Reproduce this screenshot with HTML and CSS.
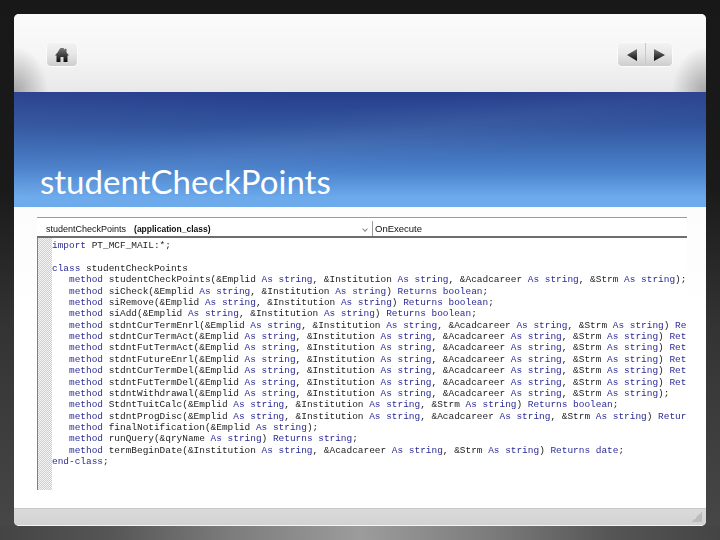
FILE: index.html
```html
<!DOCTYPE html>
<html lang="en">
<head>
<meta charset="utf-8">
<title>studentCheckPoints</title>
<link rel="stylesheet" href="styles.css">
</head>
<body>
<main class="slide">
  <header class="top">
    <button class="btn home" aria-label="Home">
      <svg width="14" height="14" viewBox="0 0 14 14"><defs><linearGradient id="g" x1="0" y1="0" x2="0" y2="1"><stop offset="0" stop-color="#777"/><stop offset="1" stop-color="#0c0c0c"/></linearGradient></defs><path fill="url(#g)" d="M5.500 0H8.500L9.500 1.500 10.500 0.500 11.500 1V4.500L14 7.500H12.500V14H8.500V9H5.500V14H1.500V7.500H0L2.500 4.500 4 2Z"/></svg>
    </button>
    <div class="btn nav">
      <span class="half wide"><svg width="10" height="12" viewBox="0 0 10 12"><path fill="url(#g)" d="M10 0V12L0 6Z"/></svg></span>
      <span class="half"><svg width="11" height="12" viewBox="0 0 11 12"><path fill="url(#g)" d="M0 0V12L11 6Z"/></svg></span>
    </div>
  </header>
  <section class="band"><h1>studentCheckPoints</h1></section>
  <section class="body">
    <div class="shot">
      <div class="bar">
        <div class="cell left"><span>studentCheckPoints</span><b class="cls">(application_class)</b><i class="chev"></i></div>
        <div class="cell right">OnExecute</div>
      </div>
      <div class="editor">
        <div class="gutter"></div>
        <pre class="code"><span class="k">import</span> PT_MCF_MAIL:*;

<span class="k">class</span> studentCheckPoints
   <span class="k">method</span> studentCheckPoints(&amp;Emplid <span class="k">As string</span>, &amp;Institution <span class="k">As string</span>, &amp;Acadcareer <span class="k">As string</span>, &amp;Strm <span class="k">As string</span>);
   <span class="k">method</span> siCheck(&amp;Emplid <span class="k">As string</span>, &amp;Institution <span class="k">As string</span>) <span class="k">Returns boolean</span>;
   <span class="k">method</span> siRemove(&amp;Emplid <span class="k">As string</span>, &amp;Institution <span class="k">As string</span>) <span class="k">Returns boolean</span>;
   <span class="k">method</span> siAdd(&amp;Emplid <span class="k">As string</span>, &amp;Institution <span class="k">As string</span>) <span class="k">Returns boolean</span>;
   <span class="k">method</span> stdntCurTermEnrl(&amp;Emplid <span class="k">As string</span>, &amp;Institution <span class="k">As string</span>, &amp;Acadcareer <span class="k">As string</span>, &amp;Strm <span class="k">As string</span>) <span class="k">Returns boolean</span>;
   <span class="k">method</span> stdntCurTermAct(&amp;Emplid <span class="k">As string</span>, &amp;Institution <span class="k">As string</span>, &amp;Acadcareer <span class="k">As string</span>, &amp;Strm <span class="k">As string</span>) <span class="k">Returns boolean</span>;
   <span class="k">method</span> stdntFutTermAct(&amp;Emplid <span class="k">As string</span>, &amp;Institution <span class="k">As string</span>, &amp;Acadcareer <span class="k">As string</span>, &amp;Strm <span class="k">As string</span>) <span class="k">Returns boolean</span>;
   <span class="k">method</span> stdntFutureEnrl(&amp;Emplid <span class="k">As string</span>, &amp;Institution <span class="k">As string</span>, &amp;Acadcareer <span class="k">As string</span>, &amp;Strm <span class="k">As string</span>) <span class="k">Returns boolean</span>;
   <span class="k">method</span> stdntCurTermDel(&amp;Emplid <span class="k">As string</span>, &amp;Institution <span class="k">As string</span>, &amp;Acadcareer <span class="k">As string</span>, &amp;Strm <span class="k">As string</span>) <span class="k">Returns boolean</span>;
   <span class="k">method</span> stdntFutTermDel(&amp;Emplid <span class="k">As string</span>, &amp;Institution <span class="k">As string</span>, &amp;Acadcareer <span class="k">As string</span>, &amp;Strm <span class="k">As string</span>) <span class="k">Returns boolean</span>;
   <span class="k">method</span> stdntWithdrawal(&amp;Emplid <span class="k">As string</span>, &amp;Institution <span class="k">As string</span>, &amp;Acadcareer <span class="k">As string</span>, &amp;Strm <span class="k">As string</span>);
   <span class="k">method</span> StdntTuitCalc(&amp;Emplid <span class="k">As string</span>, &amp;Institution <span class="k">As string</span>, &amp;Strm <span class="k">As string</span>) <span class="k">Returns boolean</span>;
   <span class="k">method</span> stdntProgDisc(&amp;Emplid <span class="k">As string</span>, &amp;Institution <span class="k">As string</span>, &amp;Acadcareer <span class="k">As string</span>, &amp;Strm <span class="k">As string</span>) <span class="k">Returns boolean</span>;
   <span class="k">method</span> finalNotification(&amp;Emplid <span class="k">As string</span>);
   <span class="k">method</span> runQuery(&amp;qryName <span class="k">As string</span>) <span class="k">Returns string</span>;
   <span class="k">method</span> termBeginDate(&amp;Institution <span class="k">As string</span>, &amp;Acadcareer <span class="k">As string</span>, &amp;Strm <span class="k">As string</span>) <span class="k">Returns date</span>;
<span class="k">end-class</span>;</pre>
      </div>
    </div>
  </section>
  <footer class="foot"><i class="grip"></i></footer>
</main>
</body>
</html>
```

FILE: styles.css
```css
* { box-sizing: border-box; }
html, body { margin: 0; height: 100%; }
body {
  width: 720px; height: 540px; overflow: hidden; padding: 14px;
  background:
    linear-gradient(90deg, #444 0%, #555 15%, #7c7c7c 32%, #9c9c9c 50%, #7c7c7c 68%, #555 85%, #444 100%) bottom / 100% 14px no-repeat,
    linear-gradient(180deg, #181818 0%, #1a1a1a 35%, #333 60%, #484848 100%);
}
.slide { width: 692px; height: 512px; display: flex; flex-direction: column; border-radius: 5px; overflow: hidden; background: linear-gradient(180deg, #eceef0 0%, #fbfbfb 35%, #fff 60%); }
.top {
  height: 78px; flex: none; display: flex; justify-content: space-between; align-items: flex-start;
  padding: 28px 33px 0 32px;
  background:
    radial-gradient(ellipse 34px 46px at 0 100%, rgba(110,110,110,.55) 0%, rgba(110,110,110,0) 100%),
    radial-gradient(ellipse 34px 46px at 100% 100%, rgba(110,110,110,.55) 0%, rgba(110,110,110,0) 100%),
    linear-gradient(180deg, #fbfbfb 0%, #f5f5f5 55%, #e8e8e8 100%);
}
.btn {
  height: 25px; border: 1px solid #fbfbfb; border-radius: 5px;
  background: linear-gradient(180deg, #f2f2f2 0%, #e8e8e8 45%, #cdcdcd 100%);
  display: flex; align-items: center; justify-content: center; padding: 0;
}
.home { width: 32px; }
.nav { width: 56px; }
.half { width: 26px; height: 100%; display: flex; align-items: center; justify-content: center; }
.half.wide { width: 29px; border-right: 1px solid #c9c9c9; }
.band {
  height: 115px; flex: none; display: flex; align-items: flex-end; padding: 0 0 6px 26px;
  background:
    linear-gradient(172deg, rgba(255,255,255,0) 30%, rgba(255,255,255,.035) 45%, rgba(255,255,255,0) 60%),
    linear-gradient(160deg, rgba(255,255,255,.03) 0%, rgba(255,255,255,0) 30%),
    linear-gradient(180deg, #263d8c 0%, #33569f 30%, #4a82cc 68%, #6caaec 92%, #6caaec 100%);
}
h1 { margin: 0; font: 400 33px/40px Lato, "Open Sans", sans-serif; color: #fff; }
.body { flex: 1; min-height: 0; padding: 10px 19px 0 23px; }
.shot { height: 273px; background: #fff; border-top: 1px solid #9a9a9a; display: flex; flex-direction: column; overflow: hidden; }
.bar { height: 20px; flex: none; display: flex; padding-top: 3px; border-bottom: 2px solid #6e6e6e; font: 9px/16px "Liberation Sans", sans-serif; color: #111; filter: blur(.3px); }
.cell { height: 15px; }
.left { width: 336px; padding-left: 9px; position: relative; border-right: 1px solid #9a9a9a; white-space: pre; }
.cls { margin-left: 8px; font-size: 8.500px; }
.right { padding-left: 2px; font-size: 9.500px; }
.chev { position: absolute; right: 5px; top: 6px; width: 4px; height: 4px; border: solid #888; border-width: 0 1px 1px 0; transform: rotate(45deg); }
.editor { flex: 1; min-height: 0; display: flex; border-left: 1px solid #808080; }
.gutter { width: 14px; flex: none; background-color: #fff; background-image: conic-gradient(#cfcfcf 25%, #f4f4f4 0 50%, #cfcfcf 0 75%, #f4f4f4 0); background-size: 2px 2px; }
.code { margin: 0; padding: 2px 0 0; flex: 1; min-width: 0; overflow: hidden; font: 9.450px/11.370px "Liberation Mono", monospace; color: #222; filter: blur(.45px); white-space: pre; }
.k { color: #2b2b96; }
.foot { height: 18px; flex: none; display: flex; justify-content: flex-end; align-items: flex-end; padding: 0 4px 3px 0; background: linear-gradient(180deg, #dadada 0%, #d2d2d2 100%); border-top: 1px solid #c8c8c8; border-bottom: 1px solid #f4f4f4; }
.grip { width: 10px; height: 10px; background: linear-gradient(135deg, rgba(170,170,170,0) 50%, #bcbcbc 50%); }
```
